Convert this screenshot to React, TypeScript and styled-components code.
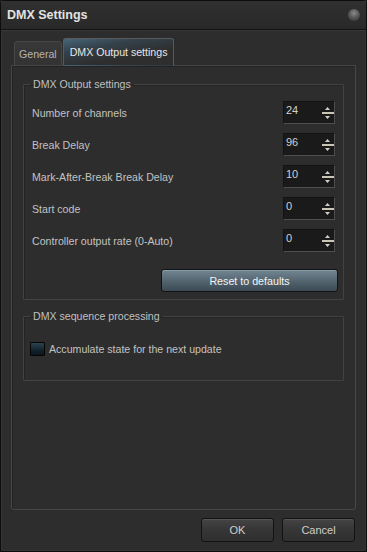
import React from 'react';
import styled, { createGlobalStyle } from 'styled-components';

const Global = createGlobalStyle`
  html, body { margin: 0; padding: 0; background: #1b1b1b; }
  body { font-family: "Liberation Sans", Arial, sans-serif; font-size: 10.6px; }
  * { box-sizing: border-box; }
`;

const Window = styled.div`
  width: 367px;
  height: 552px;
  display: flex;
  flex-direction: column;
  background: #2d2d2d;
  border: 1px solid #0d0d0d;
  border-radius: 5px 5px 2px 2px;
  box-shadow: inset 0 0 0 1px #353535;
  color: #c4c4c4;
`;

const TitleBar = styled.div`
  height: 29px;
  flex: none;
  display: flex;
  align-items: center;
  justify-content: space-between;
  padding: 0 6px 0 6px;
  border-bottom: 1px solid #121212;
  box-shadow: 0 1px 0 #383838;
  background: linear-gradient(#303030, #292929);
`;

const Title = styled.span`
  font-size: 12.5px;
  font-weight: bold;
  color: #e2e2e2;
`;

const CloseDot = styled.span`
  width: 12px;
  height: 12px;
  border-radius: 50%;
  background: radial-gradient(circle at 50% 35%, #8a8a8a 0%, #5a5a5a 45%, #2f2f2f 100%);
`;

const Content = styled.div`
  flex: 1;
  display: flex;
  flex-direction: column;
  padding: 8px 10px 0 10px;
`;

const TabBar = styled.div`
  display: flex;
  align-items: flex-end;
  padding-left: 3px;
  gap: 1px;
  margin-bottom: -1px;
  position: relative;
  z-index: 1;
`;

const Tab = styled.div<{ $active?: boolean }>`
  height: ${p => (p.$active ? 28 : 25)}px;
  padding: 0 ${p => (p.$active ? 6 : 4)}px;
  display: flex;
  align-items: center;
  border: 1px solid ${p => (p.$active ? '#5a5a5a' : '#474747')};
  border-bottom-color: ${p => (p.$active ? 'transparent' : '#474747')};
  border-radius: 3px 3px 0 0;
  color: ${p => (p.$active ? '#e6e6e6' : '#b4b4b4')};
  font-size: 10.6px;
  background: ${p =>
    p.$active
      ? 'linear-gradient(170deg, #47657a 0%, #34414a 30%, #2e2e2e 65%)'
      : 'linear-gradient(#383838, #333333)'};
`;

const TabPane = styled.div`
  flex: 1;
  border: 1px solid #474747;
  border-radius: 0 0 3px 3px;
  box-shadow: inset 1px 1px 0 #222;
  padding: 12px 11px 0 11px;
  display: flex;
  flex-direction: column;
  gap: 10px;
`;

const Group = styled.fieldset`
  margin: 0;
  border: 1px solid #424242;
  box-shadow: inset 1px 1px 0 #242424;
  border-radius: 1px;
  padding: 0 8px 0 8px;
`;

const Legend = styled.legend`
  padding: 0 3px;
  margin-left: -2px;
  font-size: 10.6px;
  line-height: 13px;
  color: #c0c0c0;
`;

const Rows = styled.div`
  display: flex;
  flex-direction: column;
  gap: 9px;
  padding-top: 10px;
`;

const Row = styled.div`
  display: flex;
  align-items: center;
  justify-content: space-between;
  height: 23px;
`;

const Label = styled.span`
  font-size: 10.6px;
  color: #c2c2c2;
`;

const SpinBox = styled.div`
  width: 52px;
  height: 23px;
  display: flex;
  justify-content: space-between;
  background: #1a1a1a;
  border: 1px solid #121212;
  border-right-color: #4e4e4e;
  border-bottom-color: #4e4e4e;
  padding: 2px 0 0 2px;
  color: #d0d0d0;
  font-size: 11px;
`;

const SpinArrows = styled.svg`
  width: 13px;
  height: 21px;
  margin-top: -2px;
`;

const Spin: React.FC<{ value: string }> = ({ value }) => (
  <SpinBox>
    <span>{value}</span>
    <SpinArrows viewBox="0 0 13 21">
      <polygon points="6.5,5 4,8 9,8" fill="#cfcfcf" />
      <rect x="1" y="10" width="12" height="2" fill="#c9c6b4" />
      <polygon points="4,14 9,14 6.5,17" fill="#cfcfcf" />
    </SpinArrows>
  </SpinBox>
);

const ResetRow = styled.div`
  display: flex;
  justify-content: flex-end;
  margin: 17px -3px 7px 0;
`;

const ResetButton = styled.button`
  width: 177px;
  height: 23px;
  border: 1px solid #0f1418;
  border-radius: 3px;
  background: linear-gradient(#728793, #52636e 55%, #3b4a54);
  box-shadow: inset 0 1px 0 #8a9ca6;
  color: #f4f4f4;
  font-family: inherit;
  font-size: 10.7px;
`;

const CheckRow = styled.label`
  display: flex;
  align-items: center;
  gap: 4px;
  margin: 19px 0 24px -2px;
`;

const CheckBox = styled.span`
  width: 15px;
  height: 14px;
  border: 1px solid #050505;
  border-radius: 1px;
  background: linear-gradient(#2c4452, #12232b 60%, #0b151a);
`;

const Footer = styled.div`
  flex: none;
  display: flex;
  justify-content: flex-end;
  gap: 8px;
  padding: 8px 11px 9px 0;
`;

const DialogButton = styled.button`
  width: 73px;
  height: 24px;
  border: 1px solid #121212;
  border-radius: 3px;
  background: linear-gradient(#444444, #363636 50%, #2f2f2f);
  box-shadow: inset 0 1px 0 #555;
  color: #cfcfcf;
  font-family: inherit;
  font-size: 11px;
`;

const settings = [
  { label: 'Number of channels', value: '24' },
  { label: 'Break Delay', value: '96' },
  { label: 'Mark-After-Break Break Delay', value: '10' },
  { label: 'Start code', value: '0' },
  { label: 'Controller output rate (0-Auto)', value: '0' },
];

const App: React.FC = () => (
  <>
    <Global />
    <Window>
      <TitleBar>
        <Title>DMX Settings</Title>
        <CloseDot />
      </TitleBar>
      <Content>
        <TabBar>
          <Tab>General</Tab>
          <Tab $active>DMX Output settings</Tab>
        </TabBar>
        <TabPane>
          <Group>
            <Legend>DMX Output settings</Legend>
            <Rows>
              {settings.map(s => (
                <Row key={s.label}>
                  <Label>{s.label}</Label>
                  <Spin value={s.value} />
                </Row>
              ))}
            </Rows>
            <ResetRow>
              <ResetButton>Reset to defaults</ResetButton>
            </ResetRow>
          </Group>
          <Group>
            <Legend>DMX sequence processing</Legend>
            <CheckRow>
              <CheckBox />
              <Label>Accumulate state for the next update</Label>
            </CheckRow>
          </Group>
        </TabPane>
      </Content>
      <Footer>
        <DialogButton>OK</DialogButton>
        <DialogButton>Cancel</DialogButton>
      </Footer>
    </Window>
  </>
);

export default App;
